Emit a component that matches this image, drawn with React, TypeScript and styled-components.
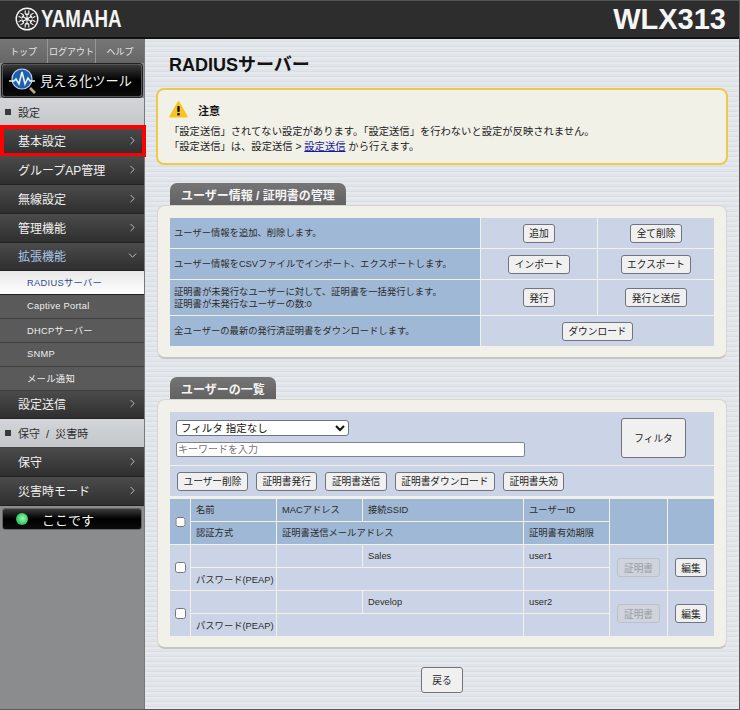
import React from "react";
import styled, { createGlobalStyle } from "styled-components";
import { ChevronRight, ChevronDown } from "lucide-react";

const JP = `"Liberation Sans", "Noto Sans CJK JP", sans-serif`;

const Global = createGlobalStyle`
  * { box-sizing: border-box; }
  html, body { margin: 0; padding: 0; background: #e0e4ea; }
  body { font-family: ${JP}; font-size: 10px; color: #222; }
`;

const Page = styled.div`
  width: 740px;
  height: 710px;
  overflow: hidden;
  display: flex;
  flex-direction: column;
  border-right: 1px solid #5a5a5a;
  border-bottom: 1px solid #5a5a5a;
`;
const Header = styled.header`
  height: 39px;
  flex: none;
  background: #2d2d2d;
  border-top: 1px solid #555;
  border-bottom: 2px solid #111;
  display: flex;
  align-items: center;
  justify-content: space-between;
  padding: 0 13px 0 15px;
`;
const Brand = styled.div`
  display: flex;
  align-items: center;
  gap: 2px;
`;
const BrandName = styled.span`
  display: inline-block;
  width: 80px;
  font: bold 24px "Liberation Sans", sans-serif;
  color: #f4f4f4;
  transform: scaleX(0.78);
  transform-origin: left center;
  white-space: nowrap;
`;
const Model = styled.div`
  font: bold 29px "Liberation Sans", sans-serif;
  color: #f6f6f6;
  padding-top: 1px;
`;
const Body = styled.div`
  flex: 1;
  display: flex;
  min-height: 0;
`;
const Side = styled.nav`
  width: 145px;
  flex: none;
  background: #8b8c8e;
  border-right: 1px solid #777;
  position: relative;
  z-index: 1;
`;
const TopNav = styled.div`
  height: 24px;
  display: grid;
  grid-template-columns: repeat(3, 1fr);
  background: #6f6f6f;
`;
const TopLink = styled.div`
  display: flex;
  align-items: center;
  justify-content: center;
  font-size: 9px;
  color: #e6e6e6;
  border-right: 1px solid #969696;
  background: linear-gradient(#777, #666);
  &:last-child { border-right: 0; }
`;
const ToolButton = styled.div`
  margin: 1px 2px 1px;
  height: 33px;
  background: linear-gradient(#3a3a3a, #000 50%, #0c0c0c);
  border: 1px solid #555;
  border-radius: 3px;
  box-shadow: 0 0 0 1px #222;
  display: flex;
  align-items: center;
  gap: 1px;
  padding-left: 5px;
  font-size: 13.2px;
  color: #f2f2f2;
  white-space: nowrap;
`;
const Section = styled.div`
  height: 29px;
  background: linear-gradient(#d3d5d8, #c4c7ca);
  display: flex;
  align-items: center;
  gap: 7px;
  padding-left: 5px;
  font-size: 11px;
  word-spacing: 3px;
  color: #2c2c2c;
  border-bottom: 1px solid #444;
  &::before {
    content: "";
    width: 6px;
    height: 6px;
    background: #3a3a3a;
  }
`;
const MenuRow = styled.div<{ $open?: boolean; $marked?: boolean; $short?: boolean }>`
  height: ${(p) => (p.$short ? 28 : 29)}px;
  background: linear-gradient(#4b4b4b, #2f2f2f);
  border-bottom: 1px solid #222;
  display: flex;
  align-items: center;
  justify-content: space-between;
  padding: 0 5px 2px 18px;
  font-size: 12px;
  color: ${(p) => (p.$open ? "#a9c6e8" : "#f0f0f0")};
  position: relative;
  ${(p) =>
    p.$marked &&
    `&::after {
      content: "";
      position: absolute;
      left: 0; right: -2px; top: -2px; bottom: -2px;
      border: 4px solid #f00;
    }`}
`;
const SubRow = styled.div<{ $active?: boolean }>`
  height: 24px;
  display: flex;
  align-items: center;
  padding: 0 0 2px 27px;
  font-size: 9.3px;
  letter-spacing: 0.3px;
  color: ${(p) => (p.$active ? "#2f4b88" : "#efefef")};
  background: ${(p) =>
    p.$active ? "linear-gradient(#e8e8e8, #fff)" : "#5a5a5a"};
  border-bottom: 1px solid ${(p) => (p.$active ? "#222" : "#3e3e3e")};
`;
const HereButton = styled.div`
  margin: 2px 2px;
  height: 22px;
  background: linear-gradient(#3a3a3a, #000 50%, #0c0c0c);
  border: 1px solid #666;
  border-radius: 3px;
  display: flex;
  align-items: center;
  padding-left: 13px;
  gap: 14px;
  font-size: 13px;
  color: #f2f2f2;
`;
const Lamp = styled.span`
  width: 12px;
  height: 12px;
  border-radius: 50%;
  background: radial-gradient(circle at 55% 45%, #a5f5bb, #2fce5e 60%, #1f9f45);
`;
const Main = styled.main`
  flex: 1;
  min-width: 0;
  padding: 0 12px;
  background: repeating-linear-gradient(#e1e5ea 0 2px, #d9dee5 2px 3px, #e6e9ed 3px 5px);
`;
const Title = styled.h1`
  margin: 0;
  height: 49px;
  padding: 11px 0 0 12px;
  font: bold 18px ${JP};
  color: #111;
`;
const Notice = styled.section`
  margin: 0 -1px 18px;
  height: 77px;
  background: #f1f1e8;
  border: 2px solid #efc94a;
  border-radius: 8px;
  padding: 10px 11px 0;
`;
const NoticeHead = styled.div`
  display: flex;
  align-items: center;
  gap: 10px;
  height: 19px;
  font-size: 11px;
  font-weight: bold;
  color: #111;
`;
const NoticeLine = styled.p`
  margin: 0;
  line-height: 15px;
  font-size: 10.3px;
  color: #222;
  &:first-of-type { margin-top: 5px; }
`;
const NoticeLink = styled.a`
  color: #1a1a9a;
  text-decoration: underline;
`;
const Tab = styled.div`
  margin-left: 13px;
  height: 22px;
  width: fit-content;
  padding: 3px 11px 0;
  background: linear-gradient(#757575, #626262);
  border-radius: 7px 7px 0 0;
  font-size: 12px;
  font-weight: bold;
  color: #f4f4f4;
  white-space: nowrap;
`;
const Panel = styled.section<{ $gap?: number }>`
  background: #f1f1ea;
  border: 1px solid #d6d6d0;
  border-bottom: 2px solid #c6c6c2;
  border-radius: 8px;
  padding: 12px 12px 11px;
  margin-bottom: ${(p) => p.$gap ?? 0}px;
`;
const Grid = styled.table`
  border-collapse: separate;
  border-spacing: 1px;
  table-layout: fixed;
  width: 546px;
  margin: -1px;
`;
const Head = styled.td<{ $h?: number }>`
  background: #9fb8d5;
  height: ${(p) => p.$h ?? 30}px;
  padding: 0 4px;
  font-size: 9.3px;
  line-height: 12px;
  color: #2b2b2b;
  white-space: nowrap;
`;
const Cell = styled.td<{ $h?: number; $center?: boolean }>`
  background: #cbd4e7;
  height: ${(p) => p.$h ?? 30}px;
  padding: 0 5px;
  vertical-align: middle;
  text-align: ${(p) => (p.$center ? "center" : "left")};
  font-size: 9.3px;
  color: #2b2b2b;
  white-space: nowrap;
`;
const ListHead = styled(Head)<{ $center?: boolean }>`
  height: 22px;
  padding: 0 5px;
  text-align: ${(p) => (p.$center ? "center" : "left")};
`;
const Btn = styled.button<{ $gray?: boolean }>`
  height: 19px;
  padding: 0 5.5px;
  background: ${(p) => (p.$gray ? "#cfd3dc" : "#f0f0f0")};
  border: 1px solid ${(p) => (p.$gray ? "#bcc0c8" : "#70747c")};
  border-radius: 3px;
  font: 9.7px ${JP};
  color: ${(p) => (p.$gray ? "#9a9ea6" : "#1c1c1c")};
  white-space: nowrap;
`;
const FilterBlock = styled.div`
  height: 53px;
  background: #cbd4e7;
  padding: 8px 28px 0 6px;
  display: flex;
  justify-content: space-between;
`;
const FilterFields = styled.div`
  display: flex;
  flex-direction: column;
  gap: 6px;
`;
const Select = styled.select`
  width: 173px;
  height: 16px;
  padding: 0;
  font: 10.5px ${JP};
  color: #111;
  background: #fff;
  border: 1px solid #70747c;
  border-radius: 3px;
`;
const Keyword = styled.input`
  width: 349px;
  height: 15px;
  padding: 0 1px;
  font: 10px ${JP};
  background: #fff;
  border: 1px solid #80848c;
  border-radius: 2px;
  &::placeholder { color: #777; }
`;
const FilterBtn = styled(Btn)`
  width: 65px;
  height: 40px;
  margin-top: -2px;
`;
const Actions = styled.div`
  margin-top: 1px;
  height: 30px;
  background: #cbd4e7;
  padding: 0 7px;
  display: flex;
  align-items: center;
  gap: 8px;
`;
const ListWrap = styled.div`
  margin-top: 3px;
`;
const Check = styled.input.attrs({ type: "checkbox" })`
  width: 10.5px;
  height: 10.5px;
  margin: 0;
  vertical-align: middle;
`;
const Foot = styled.div`
  display: flex;
  justify-content: center;
  margin-top: 18px;
`;
const BackBtn = styled(Btn)`
  width: 42px;
  height: 26px;
`;

const Emblem = () => (
  <svg width="24" height="24" viewBox="0 0 24 24" fill="none" stroke="#f4f4f4">
    <circle cx="12" cy="12" r="10.8" strokeWidth="1.4" />
    {[0, 60, 120, 180, 240, 300].map((a) => (
      <g key={a} transform={`rotate(${a} 12 12)`} strokeWidth="1.1">
        <path d="M12 12V6.2" />
        <path d="M10.2 3.4v3.2q0 1 1.8 1t1.8-1V3.4" />
      </g>
    ))}
    <circle cx="12" cy="12" r="1.5" fill="#f4f4f4" stroke="none" />
  </svg>
);

const ToolIcon = () => (
  <svg width="31" height="31" viewBox="0 0 31 31" fill="none">
    <circle cx="14" cy="14" r="10" fill="#1f5fae" stroke="#b6d3ee" strokeWidth="1.2" />
    <path d="M1 16h5l2-2 3 5 3-12 3 12 3-6 2 3h5" stroke="#e8f3ff" strokeWidth="1.6" />
    <path d="M22 23l5 5" stroke="#b9a98c" strokeWidth="2.6" />
  </svg>
);

const WarnIcon = () => (
  <svg width="19" height="17" viewBox="0 0 19 17">
    <path d="M9.5 1 18 15.6H1Z" fill="#f7c51e" stroke="#f7c51e" strokeWidth="1.6" strokeLinejoin="round" />
    <rect x="8.3" y="5" width="2.4" height="6" rx="0.8" fill="#111" />
    <rect x="8.3" y="12" width="2.4" height="2.4" fill="#111" />
  </svg>
);

const menuA = ["グループAP管理", "無線設定", "管理機能"];
const subs = ["Captive Portal", "DHCPサーバー", "SNMP", "メール通知"];
const users = [
  { ssid: "Sales", id: "user1" },
  { ssid: "Develop", id: "user2" },
];
const actions = ["ユーザー削除", "証明書発行", "証明書送信", "証明書ダウンロード", "証明書失効"];
const chev = <ChevronRight size={13} color="#ddd" strokeWidth={1.5} />;

export default function App() {
  return (
    <Page>
      <Global />
      <Header>
        <Brand>
          <Emblem />
          <BrandName>YAMAHA</BrandName>
        </Brand>
        <Model>WLX313</Model>
      </Header>
      <Body>
        <Side>
          <TopNav>
            <TopLink>トップ</TopLink>
            <TopLink>ログアウト</TopLink>
            <TopLink>ヘルプ</TopLink>
          </TopNav>
          <ToolButton>
            <ToolIcon />
            見える化ツール
          </ToolButton>
          <Section>設定</Section>
          <MenuRow $marked>基本設定{chev}</MenuRow>
          {menuA.map((m) => (
            <MenuRow key={m}>{m}{chev}</MenuRow>
          ))}
          <MenuRow $open $short>拡張機能<ChevronDown size={13} color="#ddd" strokeWidth={1.5} /></MenuRow>
          <SubRow $active>RADIUSサーバー</SubRow>
          {subs.map((s) => (
            <SubRow key={s}>{s}</SubRow>
          ))}
          <MenuRow $short>設定送信{chev}</MenuRow>
          <Section>保守 / 災害時</Section>
          <MenuRow>保守{chev}</MenuRow>
          <MenuRow>災害時モード{chev}</MenuRow>
          <HereButton><Lamp />ここです</HereButton>
        </Side>
        <Main>
          <Title>RADIUSサーバー</Title>
          <Notice>
            <NoticeHead><WarnIcon />注意</NoticeHead>
            <NoticeLine>「設定送信」されてない設定があります。「設定送信」を行わないと設定が反映されません。</NoticeLine>
            <NoticeLine>「設定送信」は、設定送信 &gt; <NoticeLink>設定送信</NoticeLink> から行えます。</NoticeLine>
          </Notice>
          <Tab>ユーザー情報 / 証明書の管理</Tab>
          <Panel $gap={18}>
            <Grid>
              <colgroup><col width="310" /><col width="116" /><col width="116" /></colgroup>
              <tbody>
                <tr>
                  <Head>ユーザー情報を追加、削除します。</Head>
                  <Cell $center><Btn>追加</Btn></Cell>
                  <Cell $center><Btn>全て削除</Btn></Cell>
                </tr>
                <tr>
                  <Head>ユーザー情報をCSVファイルでインポート、エクスポートします。</Head>
                  <Cell $center><Btn>インポート</Btn></Cell>
                  <Cell $center><Btn>エクスポート</Btn></Cell>
                </tr>
                <tr>
                  <Head $h={35}>証明書が未発行なユーザーに対して、証明書を一括発行します。<br />証明書が未発行なユーザーの数:0</Head>
                  <Cell $h={35} $center><Btn>発行</Btn></Cell>
                  <Cell $h={35} $center><Btn>発行と送信</Btn></Cell>
                </tr>
                <tr>
                  <Head>全ユーザーの最新の発行済証明書をダウンロードします。</Head>
                  <Cell $center colSpan={2}><Btn>ダウンロード</Btn></Cell>
                </tr>
              </tbody>
            </Grid>
          </Panel>
          <Tab>ユーザーの一覧</Tab>
          <Panel>
            <FilterBlock>
              <FilterFields>
                <Select defaultValue="none"><option value="none">フィルタ 指定なし</option></Select>
                <Keyword placeholder="キーワードを入力" />
              </FilterFields>
              <FilterBtn>フィルタ</FilterBtn>
            </FilterBlock>
            <Actions>
              {actions.map((a) => (
                <Btn key={a}>{a}</Btn>
              ))}
            </Actions>
            <ListWrap>
              <Grid>
                <colgroup>
                  <col width="20" /><col width="85" /><col width="85" /><col width="160" />
                  <col width="85" /><col width="57" /><col width="46" />
                </colgroup>
                <tbody>
                  <tr>
                    <ListHead $center rowSpan={2}><Check /></ListHead>
                    <ListHead>名前</ListHead>
                    <ListHead>MACアドレス</ListHead>
                    <ListHead>接続SSID</ListHead>
                    <ListHead>ユーザーID</ListHead>
                    <ListHead rowSpan={2} />
                    <ListHead rowSpan={2} />
                  </tr>
                  <tr>
                    <ListHead>認証方式</ListHead>
                    <ListHead colSpan={2}>証明書送信メールアドレス</ListHead>
                    <ListHead>証明書有効期限</ListHead>
                  </tr>
                  {users.map((u) => (
                    <React.Fragment key={u.id}>
                      <tr>
                        <Cell $h={22} $center rowSpan={2}><Check /></Cell>
                        <Cell $h={22} />
                        <Cell $h={22} />
                        <Cell $h={22}>{u.ssid}</Cell>
                        <Cell $h={22}>{u.id}</Cell>
                        <Cell $h={22} $center rowSpan={2}><Btn $gray disabled>証明書</Btn></Cell>
                        <Cell $h={22} $center rowSpan={2}><Btn>編集</Btn></Cell>
                      </tr>
                      <tr>
                        <Cell $h={22}>パスワード(PEAP)</Cell>
                        <Cell $h={22} colSpan={2} />
                        <Cell $h={22} />
                      </tr>
                    </React.Fragment>
                  ))}
                </tbody>
              </Grid>
            </ListWrap>
          </Panel>
          <Foot><BackBtn>戻る</BackBtn></Foot>
        </Main>
      </Body>
    </Page>
  );
}
